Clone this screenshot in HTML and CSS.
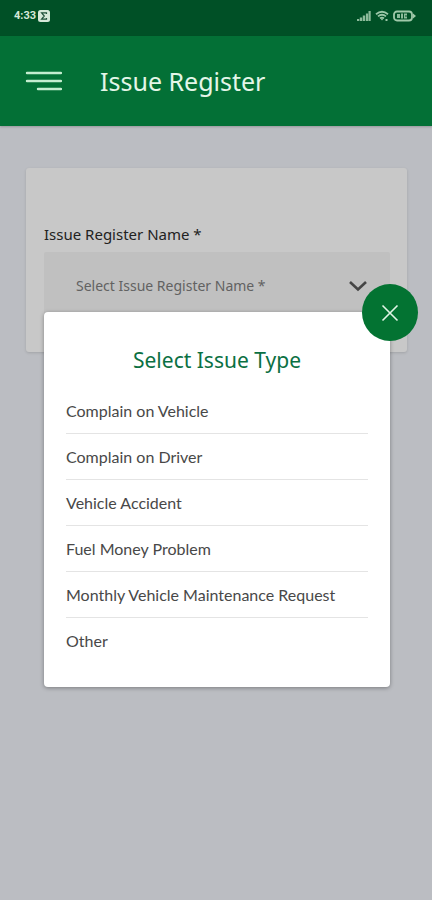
FILE: index.html
```html
<!DOCTYPE html>
<html lang="en">
<head>
<meta charset="utf-8">
<meta name="viewport" content="width=device-width, initial-scale=1">
<title>Issue Register</title>
<link rel="stylesheet" href="styles.css">
</head>
<body>
<div class="status">
  <div class="status-group">
    <span class="clock">4:33</span>
    <svg class="badge" width="12" height="12" viewBox="0 0 12 12" aria-hidden="true"><rect width="12" height="12" rx="2.5" fill="#d6e8d9"/><path d="M8.5 4V2.8H3.6L6.3 6 3.6 9.2h4.9V8" fill="none" stroke="#20503a" stroke-width="1.2"/></svg>
  </div>
  <div class="status-group">
    <svg width="14" height="12" viewBox="0 0 14 12" aria-hidden="true"><path d="M1 11V9M4 11V7.5M7 11V5.5" stroke="#8dbb9b" stroke-width="2.4"/><path d="M10 11V3.5M12.6 11V1" stroke="#8dbb9b" stroke-width="2.2"/></svg>
    <svg width="14" height="12" viewBox="0 0 14 12" aria-hidden="true"><path d="M1 4.2Q7-.8 13 4.2M3 6.4Q7 3 11 6.4M5 8.4Q7 6.8 9 8.4" fill="none" stroke="#9cc7a8" stroke-width="1.8"/><path d="M5.5 8.5h3L7 10.5zM10.5 9h2v2h-2z" fill="#9cc7a8"/></svg>
    <svg width="23" height="12" viewBox="0 0 23 12" aria-hidden="true"><rect x="1" y="1.5" width="18" height="9" rx="3" fill="none" stroke="#a0c9aa" stroke-width="1.8"/><path d="M20 3.500l3 2.500-3 2.500z" fill="#a0c9aa"/><path d="M4 4h3v4H4zM8 3.500h2v5H8zM11 3.500h3v2h-2v1h2v2h-3z" fill="#8dbb9b"/></svg>
  </div>
</div>
<header class="bar">
  <button class="menu" type="button" aria-label="Menu">
    <svg width="38" height="22" viewBox="0 0 38 22" aria-hidden="true"><path d="M3 3h34M3 11h34M14 19h23" stroke="#c4edd0" stroke-width="2.4" stroke-linecap="round"/></svg>
  </button>
  <h1>Issue Register</h1>
</header>
<main>
  <section class="card">
    <label for="register">Issue Register Name *</label>
    <div class="field">
      <select id="register"><option>Select Issue Register Name *</option></select>
      <svg class="chevron" width="20" height="12" viewBox="0 0 20 12" aria-hidden="true"><path d="M2 2l8 7.500L18 2" fill="none" stroke="#454545" stroke-width="2.600"/></svg>
      <div class="dialog" role="dialog" aria-labelledby="dialog-title">
        <button class="close" type="button" aria-label="Close">
          <svg width="18" height="18" viewBox="0 0 18 18" aria-hidden="true"><path d="M1.500 1.500l15 15M16.500 1.500l-15 15" stroke="#e2f5e6" stroke-width="1.600"/></svg>
        </button>
        <h2 id="dialog-title">Select Issue Type</h2>
        <ul>
          <li><button type="button">Complain on Vehicle</button></li>
          <li><button type="button">Complain on Driver</button></li>
          <li><button type="button">Vehicle Accident</button></li>
          <li><button type="button">Fuel Money Problem</button></li>
          <li><button type="button">Monthly Vehicle Maintenance Request</button></li>
          <li><button type="button">Other</button></li>
        </ul>
      </div>
    </div>
  </section>
</main>
</body>
</html>
```
FILE: styles.css
```css
* { box-sizing: border-box; }
body {
  margin: 0;
  min-height: 100vh;
  background: #bbbdc2;
  font-family: Lato, "Noto Sans", sans-serif;
}
button {
  border: 0;
  padding: 0;
  background: none;
  font: inherit;
  color: inherit;
  cursor: pointer;
}
svg { display: block; }
.status {
  display: flex;
  justify-content: space-between;
  align-items: center;
  height: 36px;
  padding: 0 16px 4px 14px;
  background: #005026;
}
.status-group { display: flex; align-items: center; gap: 4px; }
.status-group:first-child { gap: 2px; }
.clock {
  font: 700 11px/16px Roboto, sans-serif;
  color: #d6e8d9;
}
.bar {
  display: flex;
  align-items: center;
  gap: 38px;
  height: 90px;
  padding: 0 24px;
  background: #037036;
  box-shadow: 0 1px 2px rgba(0, 0, 0, .2);
}
h1 {
  margin: 0;
  font: 400 25px/36px "Noto Sans", sans-serif;
  color: #e4f6e8;
}
main { padding: 42px 25px 42px 26px; }
.card {
  padding: 56px 17px 32px 18px;
  border-radius: 3px;
  background: #c8c8c8;
  box-shadow: 0 1px 3px rgba(0, 0, 0, .14);
}
.card label {
  display: block;
  padding-bottom: 8px;
  font: 400 15px/20px "Noto Sans", sans-serif;
  color: #222;
}
.field { position: relative; }
select {
  display: block;
  width: 100%;
  height: 68px;
  padding: 0 48px 0 32px;
  border: 0;
  border-radius: 2px;
  appearance: none;
  background: #c0c0c0;
  font: 400 14px/20px "Noto Sans", sans-serif;
  color: #626262;
}
.chevron { position: absolute; top: 28px; right: 22px; }
.dialog {
  position: absolute;
  top: 60px;
  left: 0;
  right: 0;
  padding: 32px 22px 24px;
  border-radius: 4px;
  background: #fff;
  box-shadow: 0 1px 4px rgba(0, 0, 0, .35);
}
.close {
  position: absolute;
  top: -28px;
  right: -28px;
  display: grid;
  place-items: center;
  width: 56px;
  height: 57px;
  border-radius: 50%;
  background: #037332;
}
h2 {
  margin: 0 0 12px;
  font: 400 21px/32px "Noto Sans", sans-serif;
  text-align: center;
  color: #0b7043;
}
ul { margin: 0; padding: 0; list-style: none; }
li { border-bottom: 1px solid #e4e4e4; }
li:last-child { border-bottom: 0; }
li button {
  display: block;
  width: 100%;
  height: 45px;
  font-size: 16px;
  line-height: 20px;
  text-align: left;
  color: #484848;
}
```
